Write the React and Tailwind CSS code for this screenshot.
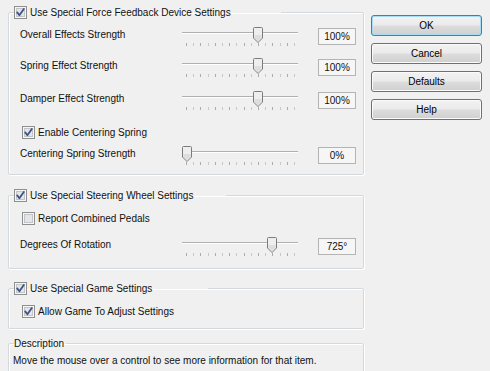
import React from "react";

const font = "font-['Liberation_Sans',Arial,sans-serif]";

// Win7 style checkbox
const CheckBox = ({ checked }) => (
    <svg width="13" height="13" viewBox="0 0 13 13" className="shrink-0 block">
        <rect x="0.5" y="0.5" width="12" height="12" fill="#f6f6f6" stroke="#8e8f8f" />
        <rect x="2.5" y="2.5" width="8" height="8" fill="#e3e5e9" stroke="#c2c4c8" strokeWidth="1" />
        {checked && (
            <path
                d="M3.2 6.4 L5.4 9.2 L9.8 3"
                fill="none"
                stroke="#3d5285"
                strokeWidth="1.8"
                strokeLinecap="round"
                strokeLinejoin="round"
            />
        )}
    </svg>
);

const CheckLabel = ({ checked, children }) => (
    <div className="flex items-center h-[13px] gap-[3px]">
        <CheckBox checked={checked} />
        <span className="leading-[13px] whitespace-nowrap">{children}</span>
    </div>
);

const ticks = Array.from({ length: 16 }, (_, i) => 4 + i * 7.2);

const Slider = ({ thumb }) => (
    <div className="relative w-[116px] h-[19px]">
        <div className="mt-[5px] h-[2px] border-t border-[#b0b0b0] bg-white" />
        <svg width="116" height="3" className="block mt-[9px]">
            {ticks.map((x, i) => (
                <line
                    key={i}
                    x1={Math.round(x) + 0.5}
                    x2={Math.round(x) + 0.5}
                    y1="0"
                    y2="3"
                    stroke={i % 2 ? "#c8c8c8" : "#acacac"}
                />
            ))}
        </svg>
        <svg
            width="10"
            height="16"
            viewBox="0 0 10 16"
            className="absolute top-0"
            style={{ left: thumb }}
        >
            <path
                d="M0.5 1.5 Q0.5 0.5 1.5 0.5 H8.5 Q9.5 0.5 9.5 1.5 V11 L5 15.5 L0.5 11 Z"
                fill="#eeeeee"
                stroke="#7b7b7b"
            />
            <path d="M1.5 8 H8.5 V11 L5 14.5 L1.5 11 Z" fill="#dedede" />
        </svg>
    </div>
);

const SliderRow = ({ label, value, thumb, className = "" }) => (
    <div className={`flex items-start h-[19px] ${className}`}>
        <div className="w-[168px] pl-[6px] mt-[1px] leading-[13px] whitespace-nowrap">{label}</div>
        <Slider thumb={thumb} />
        <div className="ml-[20px] mt-[1px] w-[38px] h-[17px] border border-[#b4b4b4] bg-[#f6f6f6] flex items-center justify-center leading-[13px]">
            {value}
        </div>
    </div>
);

const Group = ({ legend, legendWidth, className = "", children }) => (
    <fieldset
        className={`border border-[#d3d9dd] rounded-[2px] pl-[5px] pr-[5px] shadow-[inset_1px_1px_0_#ffffff,1px_1px_0_#ffffff] ${className}`}
    >
        <legend className={legendWidth}>{legend}</legend>
        {children}
    </fieldset>
);

const Button = ({ children, focused }) => (
    <button
        className={`h-[21px] w-[111px] rounded-[3px] border leading-[13px] text-black bg-[linear-gradient(#f2f2f2_0%,#ebebeb_48%,#dddddd_52%,#cfcfcf_100%)] ${
            focused
                ? "border-[#3c7fb1] shadow-[inset_0_0_0_1px_#a7dcf3]"
                : "border-[#707070] shadow-[inset_0_0_0_1px_#fbfbfb]"
        }`}
    >
        {children}
    </button>
);

export default function App() {
    return (
        <div className={`w-[490px] h-[371px] overflow-hidden bg-[#f0f0f0] flex text-[10px] text-[#111] ${font}`}>
            <div className="ml-[8px] w-[356px] pt-[6px]">
                <Group
                    legendWidth="w-[267px]"
                    className="pb-[9px]"
                    legend={<CheckLabel checked>Use Special Force Feedback Device Settings</CheckLabel>}
                >
                    <SliderRow className="mt-[8px]" label="Overall Effects Strength" value="100%" thumb={71} />
                    <SliderRow className="mt-[12px]" label="Spring Effect Strength" value="100%" thumb={71} />
                    <SliderRow className="mt-[14px]" label="Damper Effect Strength" value="100%" thumb={71} />
                    <div className="mt-[16px] ml-[8px]">
                        <CheckLabel checked>Enable Centering Spring</CheckLabel>
                    </div>
                    <SliderRow className="mt-[7px]" label="Centering Spring Strength" value="0%" thumb={0} />
                </Group>

                <Group
                    legendWidth="w-[212px]"
                    className="mt-[14px] pb-[12px]"
                    legend={<CheckLabel checked>Use Special Steering Wheel Settings</CheckLabel>}
                >
                    <div className="mt-[10px] ml-[8px]">
                        <CheckLabel>Report Combined Pedals</CheckLabel>
                    </div>
                    <SliderRow className="mt-[12px]" label="Degrees Of Rotation" value="725°" thumb={85} />
                </Group>

                <Group
                    legendWidth="w-[194px]"
                    className="mt-[13px] pb-[10px]"
                    legend={<CheckLabel checked>Use Special Game Settings</CheckLabel>}
                >
                    <div className="mt-[10px] ml-[8px]">
                        <CheckLabel checked>Allow Game To Adjust Settings</CheckLabel>
                    </div>
                </Group>

                <Group
                    legendWidth="pr-[2px]"
                    className="mt-[8px] pb-[20px]"
                    legend={<span className="block leading-[13px]">Description</span>}
                >
                    <p className="mt-[4px] -ml-[1px] leading-[13px] whitespace-nowrap">
                        Move the mouse over a control to see more information for that item.
                    </p>
                </Group>
            </div>

            <div className="ml-[7px] pt-[15px] flex flex-col gap-[7px]">
                <Button focused>OK</Button>
                <Button>Cancel</Button>
                <Button>Defaults</Button>
                <Button>Help</Button>
            </div>
        </div>
    );
}
